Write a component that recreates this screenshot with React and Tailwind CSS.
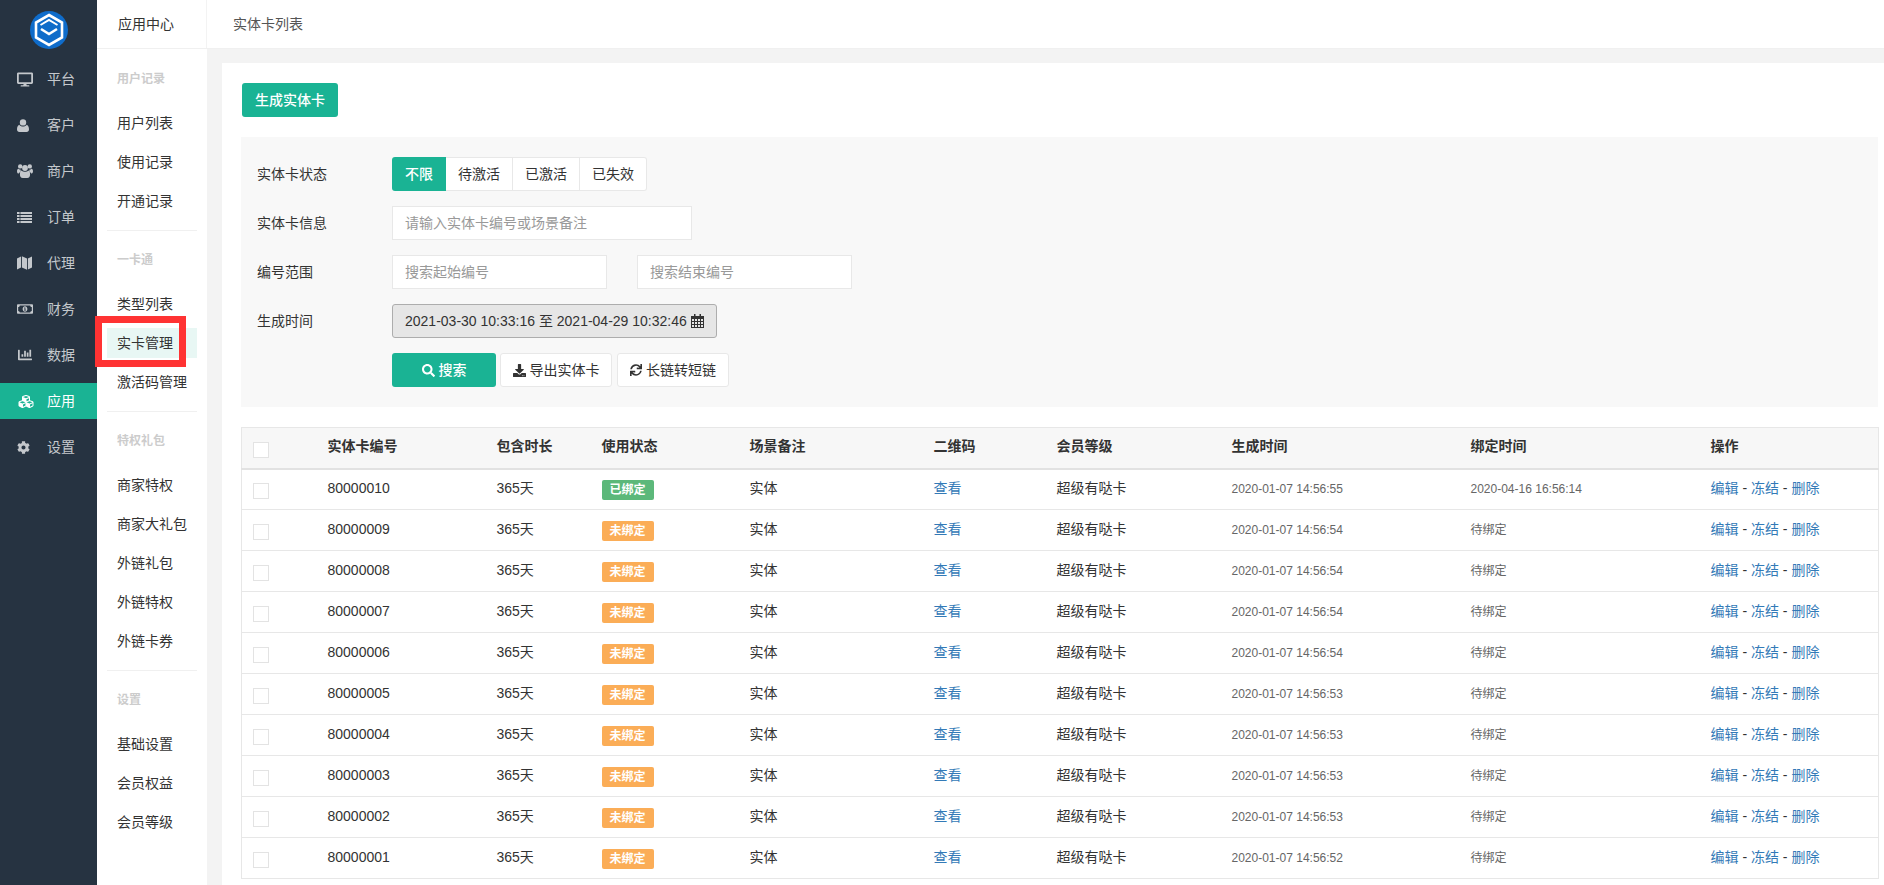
import { FaDesktop, FaRegMoneyBillAlt, FaChartBar, FaCubes, FaCog, FaSearch, FaDownload, FaSync } from "react-icons/fa";

function UserIcon({ className }) {
  return (
    <svg viewBox="0 0 12 13" className={className} fill="currentColor">
      <circle cx="6" cy="3.4" r="3.2" />
      <path d="M2.2 5.8C3 7 4.4 7.6 6 7.6s3-.6 3.8-1.8C11.2 6.4 12 8 12 10.6 12 12.2 11 13 9.6 13H2.4C1 13 0 12.2 0 10.6 0 8 .8 6.4 2.2 5.8z" />
    </svg>
  );
}

function UsersIcon({ className }) {
  return (
    <svg viewBox="0 0 16 14" className={className} fill="currentColor">
      <circle cx="3.2" cy="2.4" r="2.2" />
      <circle cx="12.8" cy="2.4" r="2.2" />
      <circle cx="8" cy="4" r="2.9" />
      <path d="M0 7.2C0 5.6.6 5 1.4 4.8c.6.6 1.5 1 2.4 1-.2.6-.3 1.2-.1 1.9-.8.3-1.6.9-2 1.8C.6 9.5 0 8.6 0 7.2zM16 7.2c0-1.6-.6-2.2-1.4-2.4-.6.6-1.5 1-2.4 1 .2.6.3 1.2.1 1.9.8.3 1.6.9 2 1.8.8 0 1.7-.9 1.7-2.3z" />
      <path d="M4.8 6.4C5.6 7.4 6.7 7.8 8 7.8s2.4-.4 3.2-1.4c1.2.3 1.9 1.4 1.9 3.6 0 2.4-.9 4-2.9 4H5.8c-2 0-2.9-1.6-2.9-4 0-2.2.7-3.3 1.9-3.6z" />
    </svg>
  );
}

function ListIcon({ className }) {
  return (
    <svg viewBox="0 0 15 11" className={className} fill="currentColor">
      <path d="M0 0h2.6v2H0zM3.4 0H15v2H3.4zM0 3h2.6v2H0zM3.4 3H15v2H3.4zM0 6h2.6v2H0zM3.4 6H15v2H3.4zM0 9h2.6v2H0zM3.4 9H15v2H3.4z" />
    </svg>
  );
}

function MapIcon({ className }) {
  return (
    <svg viewBox="0 0 15 14" className={className} fill="currentColor">
      <path d="M0 2.6 4 .4v11L0 13.6zM4.9.3 10 2.6v11.1L4.9 11.4zM10.9 2.6 15 .4v11l-4.1 2.2z" />
    </svg>
  );
}

const mainNav = [
  { label: "平台", icon: <FaDesktop className="w-[16px] h-[15px]" /> },
  { label: "客户", icon: <UserIcon className="w-[12px] h-[13px]" /> },
  { label: "商户", icon: <UsersIcon className="w-[16px] h-[14px]" /> },
  { label: "订单", icon: <ListIcon className="w-[15px] h-[11px]" /> },
  { label: "代理", icon: <MapIcon className="w-[15px] h-[14px]" /> },
  { label: "财务", icon: <FaRegMoneyBillAlt className="w-[16px] h-[14px]" /> },
  { label: "数据", icon: <FaChartBar className="w-[16px] h-[14px]" /> },
  { label: "应用", icon: <FaCubes className="w-[18px] h-[15px]" />, active: true },
  { label: "设置", icon: <FaCog className="w-[13px] h-[13px]" /> },
];

const subNav = [
  { title: "用户记录", items: ["用户列表", "使用记录", "开通记录"] },
  { title: "一卡通", items: ["类型列表", "实卡管理", "激活码管理"] },
  { title: "特权礼包", items: ["商家特权", "商家大礼包", "外链礼包", "外链特权", "外链卡券"] },
  { title: "设置", items: ["基础设置", "会员权益", "会员等级"] },
];

const rows = [
  { id: "80000010", status: "已绑定", created: "2020-01-07 14:56:55", bound: "2020-04-16 16:56:14" },
  { id: "80000009", status: "未绑定", created: "2020-01-07 14:56:54", bound: "待绑定" },
  { id: "80000008", status: "未绑定", created: "2020-01-07 14:56:54", bound: "待绑定" },
  { id: "80000007", status: "未绑定", created: "2020-01-07 14:56:54", bound: "待绑定" },
  { id: "80000006", status: "未绑定", created: "2020-01-07 14:56:54", bound: "待绑定" },
  { id: "80000005", status: "未绑定", created: "2020-01-07 14:56:53", bound: "待绑定" },
  { id: "80000004", status: "未绑定", created: "2020-01-07 14:56:53", bound: "待绑定" },
  { id: "80000003", status: "未绑定", created: "2020-01-07 14:56:53", bound: "待绑定" },
  { id: "80000002", status: "未绑定", created: "2020-01-07 14:56:53", bound: "待绑定" },
  { id: "80000001", status: "未绑定", created: "2020-01-07 14:56:52", bound: "待绑定" },
];

const headers = ["实体卡编号", "包含时长", "使用状态", "场景备注", "二维码", "会员等级", "生成时间", "绑定时间", "操作"];
const colWidths = ["w-[76px]", "w-[169px]", "w-[105px]", "w-[148px]", "w-[184px]", "w-[123px]", "w-[175px]", "w-[239px]", "w-[240px]", "w-[178px]"];

function Logo() {
  return (
    <svg viewBox="0 0 38 38" className="w-[38px] h-[38px]">
      <circle cx="19" cy="19" r="19" fill="#0f6cca" />
      <path d="M19 4 32 11.5v15L19 34 6 26.5v-15z" fill="none" stroke="#fff" strokeWidth="2.6" />
      <path d="M10.5 14 19 9l8.5 5" fill="none" stroke="#fff" strokeWidth="2" />
      <path d="M11 18 19 23l8-5" fill="none" stroke="#fff" strokeWidth="2.6" />
    </svg>
  );
}

function CalendarIcon() {
  return (
    <svg viewBox="0 0 13 14" className="w-[13px] h-[14px]" fill="#333">
      <path d="M3 0h1.5v2H3zM8.5 0H10v2H8.5z" />
      <path
        fillRule="evenodd"
        d="M0 2h13v12H0zM1 5v2h2V5zm3 0v2h2V5zm3 0v2h2V5zm3 0v2h2V5zM1 8v2h2V8zm3 0v2h2V8zm3 0v2h2V8zm3 0v2h2V8zM1 11v2h2v-2zm3 0v2h2v-2zm3 0v2h2v-2zm3 0v2h2v-2z"
      />
    </svg>
  );
}

function Checkbox({ className }) {
  return <input type="checkbox" className={`appearance-none block w-[16px] h-[16px] border border-[#e3e3e3] bg-white ${className}`} />;
}

function FilterRow({ label, children }) {
  return (
    <div className="flex items-center h-[34px]">
      <div className="w-[135px] shrink-0">{label}</div>
      {children}
    </div>
  );
}

function TextInput({ placeholder, className }) {
  return (
    <input
      placeholder={placeholder}
      className={`h-[34px] border border-[#e8e8e8] bg-white pl-[12px] text-[14px] outline-none placeholder:text-[#999] ${className}`}
    />
  );
}

export default function App() {
  return (
    <div className="flex h-screen overflow-hidden bg-white text-[14px] text-[#333] font-['Liberation_Sans','Noto_Sans_CJK_SC',sans-serif]">
      <aside className="w-[97px] shrink-0 bg-[#263341] text-[#c4c8cc]">
        <div className="flex justify-center pt-[11px] pl-[1px] h-[61px]">
          <Logo />
        </div>
        {mainNav.map((item) => (
          <div
            key={item.label}
            className={`flex items-center h-[36px] mb-[10px] pl-[17px] ${item.active ? "bg-[#1ab394] text-white" : ""}`}
          >
            <span className="w-[30px] flex">{item.icon}</span>
            {item.label}
          </div>
        ))}
      </aside>

      <div className="flex-1 min-w-0 flex flex-col">
        <header className="flex items-center h-[49px] shrink-0 border-b border-[#f0f0f0]">
          <div className="w-[110px] h-full flex items-center pl-[21px] border-r border-[#f3f3f3]">应用中心</div>
          <div className="pl-[26px] text-[#555]">实体卡列表</div>
        </header>

        <div className="flex flex-1 min-h-0">
          <nav className="w-[110px] shrink-0 px-[10px] pt-[15px]">
            {subNav.map((group, i) => (
              <div key={group.title} className={i > 0 ? "border-t border-[#f0f0f0] mt-[14px] pt-[14px]" : ""}>
                <div className="h-[30px] flex items-center pl-[10px] text-[12px] font-bold text-[#ccc] mb-[14px]">{group.title}</div>
                <div className="flex flex-col gap-[9px]">
                  {group.items.map((name) => (
                    <div
                      key={name}
                      className={`h-[30px] flex items-center pl-[10px] ${name === "实卡管理" ? "bg-[#e8f7f4]" : ""}`}
                    >
                      {name}
                    </div>
                  ))}
                </div>
              </div>
            ))}
          </nav>

          <main className="flex-1 min-w-0 bg-[#f3f3f3] pl-[15px] pt-[14px]">
            <div className="h-full bg-white pl-[19px] pr-[6px] pt-5">
              <button className="block h-[34px] w-[96px] ml-[1px] rounded-[3px] bg-[#1ab394] text-white font-medium">生成实体卡</button>

              <section className="mt-5 bg-[#f8f8f8] pl-[16px] py-5 flex flex-col gap-[15px]">
                <FilterRow label="实体卡状态">
                  <div className="flex">
                    <div className="w-[54px] h-[34px] flex items-center justify-center bg-[#1ab394] text-white rounded-l-[3px] font-medium">不限</div>
                    <div className="w-[67px] h-[34px] flex items-center justify-center bg-white border-y border-r border-[#e8e8e8]">待激活</div>
                    <div className="w-[67px] h-[34px] flex items-center justify-center bg-white border-y border-r border-[#e8e8e8]">已激活</div>
                    <div className="w-[67px] h-[34px] flex items-center justify-center bg-white border-y border-r border-[#e8e8e8] rounded-r-[3px]">已失效</div>
                  </div>
                </FilterRow>
                <FilterRow label="实体卡信息">
                  <TextInput placeholder="请输入实体卡编号或场景备注" className="w-[300px]" />
                </FilterRow>
                <FilterRow label="编号范围">
                  <TextInput placeholder="搜索起始编号" className="w-[215px]" />
                  <TextInput placeholder="搜索结束编号" className="w-[215px] ml-[30px]" />
                </FilterRow>
                <FilterRow label="生成时间">
                  <div className="w-[325px] h-[34px] flex items-center justify-between pl-[12px] pr-[12px] bg-[#e6e6e6] border border-[#adadad] rounded-[3px]">
                    2021-03-30 10:33:16 至 2021-04-29 10:32:46
                    <CalendarIcon />
                  </div>
                </FilterRow>
                <FilterRow label="">
                  <div className="flex">
                    <button className="w-[104px] h-[34px] flex items-center justify-center gap-[4px] bg-[#1ab394] text-white rounded-[3px] font-medium">
                      <FaSearch className="text-[13px]" />
                      搜索
                    </button>
                    <button className="w-[112px] h-[34px] ml-[4px] flex items-center justify-center gap-[4px] bg-white border border-[#e8e8e8] rounded-[3px]">
                      <FaDownload className="text-[13px]" />
                      导出实体卡
                    </button>
                    <button className="w-[112px] h-[34px] ml-[5px] flex items-center justify-center gap-[4px] bg-white border border-[#e8e8e8] rounded-[3px]">
                      <FaSync className="text-[12px]" />
                      长链转短链
                    </button>
                  </div>
                </FilterRow>
              </section>

              <table className="mt-5 w-full table-fixed border-collapse border border-[#e7e7e7]">
                <colgroup>
                  {colWidths.map((w) => (
                    <col key={w} className={w} />
                  ))}
                </colgroup>
                <thead>
                  <tr className="h-[41px] bg-[#f7f7f7] border-b-2 border-[#e2e2e2]">
                    <th className="pl-[11px] align-middle">
                      <Checkbox className="mt-[5px]" />
                    </th>
                    {headers.map((h) => (
                      <th key={h} className="pl-[10px] pb-[3px] text-left font-bold">
                        {h}
                      </th>
                    ))}
                  </tr>
                </thead>
                <tbody>
                  {rows.map((row) => (
                    <tr key={row.id} className="h-[41px] border-b border-[#e7e7e7]">
                      <td className="pl-[11px]">
                        <Checkbox className="mt-[4px]" />
                      </td>
                      <td className="pl-[10px] pb-[1px]">{row.id}</td>
                      <td className="pl-[10px] pb-[1px]">365天</td>
                      <td className="pl-[10px]">
                        <span
                          className={`inline-flex items-center justify-center w-[52px] h-[20px] rounded-[2px] text-[12px] font-bold text-white ${
                            row.status === "已绑定" ? "bg-[#5cb87a]" : "bg-[#fbad57]"
                          }`}
                        >
                          {row.status}
                        </span>
                      </td>
                      <td className="pl-[10px] pb-[1px]">实体</td>
                      <td className="pl-[10px] pb-[1px]">
                        <a className="text-[#337ab7]">查看</a>
                      </td>
                      <td className="pl-[10px] pb-[1px]">超级有哒卡</td>
                      <td className="pl-[10px] pb-[1px] text-[12px] text-[#666]">{row.created}</td>
                      <td className="pl-[10px] pb-[1px] text-[12px] text-[#666]">{row.bound}</td>
                      <td className="pl-[10px] pb-[1px]">
                        <a className="text-[#337ab7]">编辑</a> - <a className="text-[#337ab7]">冻结</a> - <a className="text-[#337ab7]">删除</a>
                      </td>
                    </tr>
                  ))}
                </tbody>
              </table>
            </div>
          </main>
        </div>
      </div>

      {/* annotation box drawn on the screenshot */}
      <div className="absolute left-[95px] top-[316px] w-[91px] h-[51px] border-[7px] border-[#ff3333]" />
    </div>
  );
}
